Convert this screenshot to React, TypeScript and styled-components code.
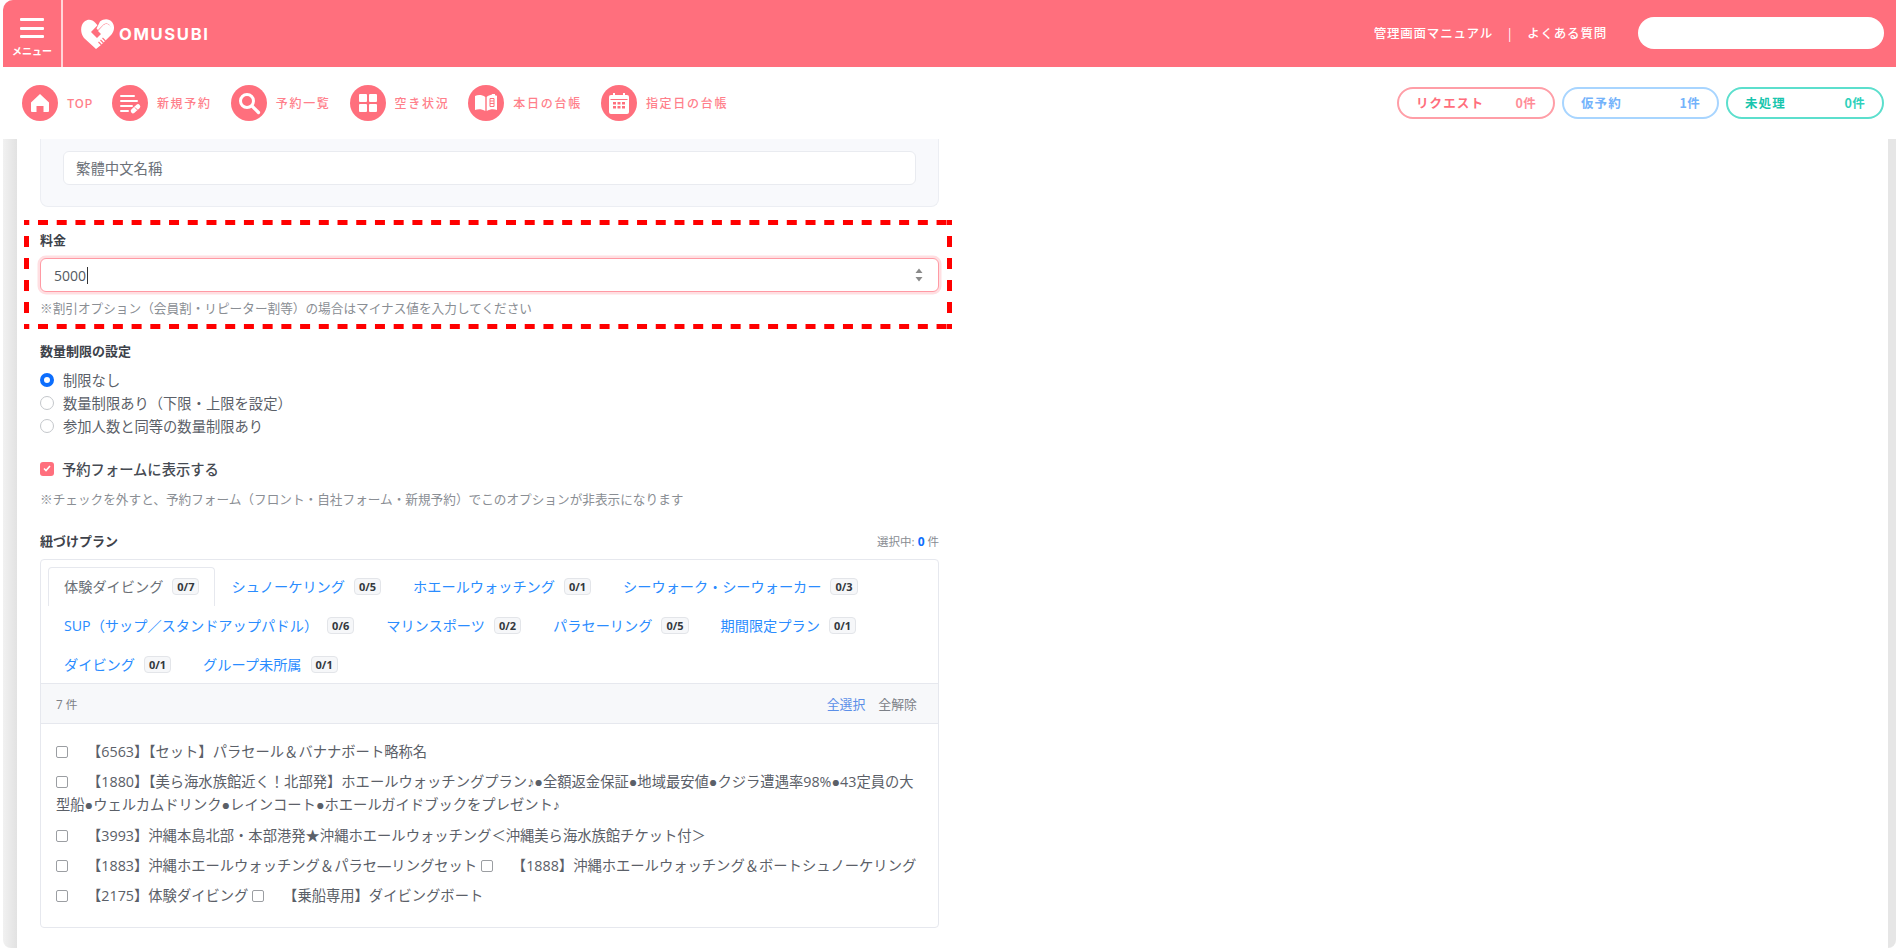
import React from "react";
import styled, { createGlobalStyle } from "styled-components";

const FONT = `"Open Sans", "Liberation Sans", "Noto Sans CJK JP", sans-serif`;
const ROUND = `"Noto Sans CJK JP", sans-serif`;
const PINK = "#ff6f7d";

const Global = createGlobalStyle`
  html, body { margin: 0; padding: 0; background: #fff; }
  body { font-family: ${FONT}; overflow: hidden; }
  * { box-sizing: border-box; }
`;

const Screen = styled.div`
  width: 1896px; height: 952px; padding: 0 0 4px 3px; background: #fff;
`;
const Frame = styled.div`
  height: 100%; display: flex; flex-direction: column;
  border-radius: 10px 0 8px 8px; overflow: hidden; background: linear-gradient(90deg, #f1f1f1 0, #e2e2e2 14px, #e6e6e6 15px);
`;
const TopBar = styled.header`
  height: 67px; flex: none; background: ${PINK}; display: flex; align-items: stretch; color: #fff;
`;
const MenuButton = styled.div`
  width: 60px; border-right: 2px solid #ffd4d8; display: flex; flex-direction: column; align-items: center;
  padding-top: 18px; font: 700 10px/1 ${ROUND};
`;
const Burger = styled.div`
  width: 24px; height: 20px; margin: 0 0 8px; display: flex; flex-direction: column; justify-content: space-between;
  span { display: block; height: 3px; background: #fff; border-radius: 1px; }
`;
const Logo = styled.div`
  display: flex; align-items: center; margin-left: 18px; gap: 5px; flex: 1;
`;
const LogoWord = styled.span`
  font: 700 16.6px/1 "Inter", sans-serif; letter-spacing: 1.65px; margin-top: 1px;
`;
const TopLinks = styled.div`
  display: flex; align-items: center; font: 500 12.5px/1 ${ROUND}; letter-spacing: 0.8px; margin-right: 31px; color: #fff;
  i { font-style: normal; margin: 0 15px; font-weight: 400; }
`;
const SearchPill = styled.div`
  width: 246px; height: 32px; margin: 17px 12px 0 0; background: #fff; border-radius: 16px;
`;

const NavBar = styled.nav`
  height: 72px; flex: none; background: #fff; display: flex; align-items: center; padding: 0 12px 0 19px;
`;
const NavList = styled.div`
  flex: 1; display: flex; gap: 19px; align-items: center;
`;
const NavItem = styled.div<{ $tight?: boolean }>`
  display: flex; align-items: center; gap: 9px; color: #ff7f8b; font: 500 12px/1 ${ROUND};
  letter-spacing: ${(p) => (p.$tight ? 0.7 : 1.7)}px;
`;
const NavCircle = styled.span`
  width: 36px; height: 36px; border-radius: 50%; background: ${PINK}; display: flex; align-items: center; justify-content: center;
`;
const Counters = styled.div`
  display: flex; gap: 7px;
`;
const tones = {
  pink: { b: "#ff9ea7", t: "#ff6e7c", n: "#ff8d98" },
  blue: { b: "#a8d5ff", t: "#74b3fb", n: "#74b3fb" },
  teal: { b: "#5cdfcd", t: "#17c5ad", n: "#2fd1bb" },
};
const Counter = styled.div<{ $tone: keyof typeof tones; $w: number }>`
  width: ${(p) => p.$w}px; height: 32px; border: 2px solid ${(p) => tones[p.$tone].b}; border-radius: 16px; display: flex;
  align-items: center; justify-content: space-between; padding: 0 17px;
  font: 700 12.5px/1 ${ROUND}; letter-spacing: 1.1px; color: ${(p) => tones[p.$tone].t};
  b { font-weight: 700; color: ${(p) => tones[p.$tone].n}; letter-spacing: 0.3px; }
`;

const Body = styled.div`
  flex: 1; min-height: 0; display: flex; padding: 0 8px 0 14px;
`;
const Main = styled.main`
  flex: 1; background: #fff; padding-left: 23px; color: #5b6068;
`;
const Column = styled.div`
  width: 899px;
`;
const LocaleCard = styled.div`
  height: 68px; background: #f8f9fc; border: 1px solid #eceef3; border-top: 0; border-radius: 0 0 8px 8px; padding: 12px 22px 0;
`;
const LocaleInput = styled.div`
  height: 34px; background: #fff; border: 1px solid #e9ebf0; border-radius: 6px; padding: 0 12px 1px;
  display: flex; align-items: center; font-size: 14.4px; color: #6c7178;
`;
const FeeField = styled.section`
  position: relative; height: 109px; margin-top: 13px; padding-top: 12px;
`;
const Outline = styled.svg`
  position: absolute; left: -16px; top: 0; pointer-events: none;
`;
const FieldLabel = styled.div`
  font-size: 13px; line-height: 16px; font-weight: 700; color: #3d424a;
`;
const FeeInput = styled.div`
  height: 34px; margin-top: 10px; border: 1px solid #ff9aa4; border-radius: 6px; background: #fff;
  box-shadow: 0 0 0 2.5px #ffdfe2; display: flex; align-items: center; padding: 0 14px 0 13px; font-size: 14px; color: #555a62;
`;
const Caret = styled.span`
  width: 1px; height: 17px; background: #333; margin-left: 1px; flex: none;
`;
const Spinner = styled.svg`
  margin-left: auto; flex: none;
`;
const Help = styled.div`
  font-size: 12.65px; line-height: 16px; color: #8a8e94;
`;
const FeeHelp = styled(Help)`
  margin-top: 8px;
`;
const QuantityLabel = styled(FieldLabel)`
  margin-top: 14px;
`;
const RadioList = styled.div`
  margin-top: 9px; display: flex; flex-direction: column;
`;
const Choice = styled.label`
  display: flex; align-items: center; gap: 9px; height: 23px; font-size: 14.3px; color: #5b6068;
`;
const Radio = styled.span<{ $on?: boolean }>`
  width: 14px; height: 14px; border-radius: 50%; flex: none; background: #fff;
  border: ${(p) => (p.$on ? "4px solid #0d6efd" : "1px solid #c4c7cb")};
`;
const ShowRow = styled(Choice)`
  margin-top: 20px; font-weight: 500; color: #454a52; gap: 8px;
`;
const PinkCheck = styled.span`
  width: 14px; height: 14px; border-radius: 3px; background: ${PINK}; flex: none; display: flex; align-items: center; justify-content: center;
`;
const ShowHelp = styled(Help)`
  margin-top: 11px;
`;
const PlanHead = styled.div`
  display: flex; justify-content: space-between; align-items: center; margin-top: 26px; height: 16px;
`;
const Selected = styled.span`
  font-size: 11.5px; color: #888c92;
  b { color: #0d6efd; font-size: 12px; font-weight: 700; }
`;
const PlanCard = styled.div`
  margin-top: 10px; height: 369px; border: 1px solid #e6e8ee; border-radius: 4px; display: flex; flex-direction: column; overflow: hidden;
`;
const Tabs = styled.div`
  height: 124px; padding: 7px 0 0 7px; display: flex; flex-wrap: wrap; align-content: flex-start;
`;
const Tab = styled.div<{ $active?: boolean }>`
  height: 39px; padding: 0 15px 2px; display: flex; align-items: center; font-size: 14.2px; white-space: nowrap;
  color: ${(p) => (p.$active ? "#6a6f76" : "#2a8cff")};
  border: 1px solid ${(p) => (p.$active ? "#e6e8ee" : "transparent")};
  border-bottom: 0; border-radius: 4px 4px 0 0;
`;
const TabCount = styled.span`
  margin-left: 9px; height: 17px; padding: 0 4px; display: flex; align-items: center; font-size: 11px; font-weight: 700; color: #33373d;
  background: #f6f7f9; border: 1px solid #e3e5e9; border-radius: 4px;
`;
const ListBar = styled.div`
  height: 41px; flex: none; background: #f7f8fa; border-top: 1px solid #e6e8ee; border-bottom: 1px solid #e6e8ee; margin-top: -1px;
  display: flex; align-items: center; justify-content: space-between; padding: 0 21px 0 15px; font-size: 12.9px; color: #7c8087;
  a { color: #5b8fe8; margin-right: 13px; }
`;
const Count = styled.span`
  font-size: 11.7px;
`;
const Items = styled.div`
  padding: 16px 15px 0 15px;
`;
const Item = styled.div`
  font-size: 14.3px; line-height: 23px; margin-bottom: 7.300px; color: #5b6068;
`;
const Box = styled.span<{ $after?: number }>`
  display: inline-block; vertical-align: -1px; width: 12px; height: 12px; border: 1px solid #9b9ea2; border-radius: 2px; background: #fff;
  margin-right: ${(p) => p.$after ?? 19}px;
`;

const Home = () => (
  <svg width="20" height="20" viewBox="0 0 20 20"><path fill="#fff" d="M10 1 19 9.500V18a1 1 0 0 1-1 1h-4.500v-6h-7v6H2a1 1 0 0 1-1-1V9.500z" /></svg>
);
const NewBooking = () => (
  <svg width="24" height="24" viewBox="0 0 24 24" fill="none">
    <path stroke="#fff" strokeWidth="2" strokeLinecap="round" d="M3 5h13M3 10h16M3 15h11M3 20h7" />
    <path stroke="#fff" strokeWidth="4.500" strokeLinecap="round" d="M15 20l5-4.500" />
    <path stroke={PINK} strokeWidth="1" d="M17 16.500l2.500 2.500" />
  </svg>
);
const Search = () => (
  <svg width="24" height="24" viewBox="0 0 24 24" fill="none">
    <circle cx="10" cy="10" r="6.500" stroke="#fff" strokeWidth="3" />
    <path stroke="#fff" strokeWidth="3.200" strokeLinecap="round" d="M15 15l6.500 6.500" />
  </svg>
);
const Grid = () => (
  <svg width="18" height="18" viewBox="0 0 18 18" fill="#fff">
    <rect width="8" height="8" rx="1" /><rect x="10" width="8" height="8" rx="1" />
    <rect y="10" width="8" height="8" rx="1" /><rect x="10" y="10" width="8" height="8" rx="1" />
  </svg>
);
const Book = () => (
  <svg width="22" height="18" viewBox="0 0 22 18">
    <path fill="#fff" d="M0 2c3-1.500 7-1.500 10.300 1v14C7 15 3 15 0 16z" />
    <path fill="#fff" d="M11.700 3C13 1.800 15 1 17 .6V0h3v1.200l2 .6V16c-3-1-7-1-10.300 1z" />
    <path stroke={PINK} strokeWidth="1" fill="none" d="M15 4.500h4v8h-4zM15 7h4M15 9.500h4" />
  </svg>
);
const Calendar = () => (
  <svg width="20" height="21" viewBox="0 0 20 21">
    <path fill="#fff" d="M2 2h2V0h2v2h8V0h2v2h2a2 2 0 0 1 2 2v15a2 2 0 0 1-2 2H2a2 2 0 0 1-2-2V4a2 2 0 0 1 2-2z" />
    <path fill={PINK} d="M1.500 6h17v1h-17zM4 9h3v2.500H4zM8.500 9h3v2.500h-3zM13 9h3v2.500h-3zM4 13h3v2.500H4zM8.500 13h3v2.500h-3zM13 13h3v2.500h-3z" />
  </svg>
);
const Heart = () => (
  <svg width="33" height="32" viewBox="0 0 33 32">
    <path fill="#fff" d="M15 31 3 20C-1 15-.8 7 3.500 3.500 7 .7 11 1 14.500 5l2 2.300L10 14l6 6 4-4-3-3 5-5.500c2-2 5-2 6.800 0s2 4.500.200 7z" />
    <path fill="#fff" d="M19 3.500c4-3 9-3 12 .5 3 3.500 2.500 9-.5 12.500L20 27l-5 4 2-5 11-12c1.500-2 2-5 .5-7-1.500-1.500-4-2-6-.5L17 12l-1.500-1.500z" />
    <path stroke={PINK} strokeWidth="1.100" fill="none" d="M17.500 24l3 3M19.500 22l3 3M21.500 20l3 3" />
  </svg>
);

const navItems = [
  { icon: <Home />, label: "TOP" },
  { icon: <NewBooking />, label: "新規予約" },
  { icon: <Search />, label: "予約一覧" },
  { icon: <Grid />, label: "空き状況" },
  { icon: <Book />, label: "本日の台帳" },
  { icon: <Calendar />, label: "指定日の台帳" },
];
const tabs = [
  ["体験ダイビング", "0/7"], ["シュノーケリング", "0/5"], ["ホエールウォッチング", "0/1"], ["シーウォーク・シーウォーカー", "0/3"],
  ["SUP（サップ／スタンドアップパドル）", "0/6"], ["マリンスポーツ", "0/2"], ["パラセーリング", "0/5"], ["期間限定プラン", "0/1"],
  ["ダイビング", "0/1"], ["グループ未所属", "0/1"],
];

export default function App() {
  return (
    <Screen>
      <Global />
      <Frame>
        <TopBar>
          <MenuButton>
            <Burger><span /><span /><span /></Burger>
            メニュー
          </MenuButton>
          <Logo>
            <Heart />
            <LogoWord>OMUSUBI</LogoWord>
          </Logo>
          <TopLinks>管理画面マニュアル<i>|</i>よくある質問</TopLinks>
          <SearchPill />
        </TopBar>
        <NavBar>
          <NavList>
            {navItems.map((n) => (
              <NavItem key={n.label} $tight={n.label === "TOP"}><NavCircle>{n.icon}</NavCircle>{n.label}</NavItem>
            ))}
          </NavList>
          <Counters>
            <Counter $tone="pink" $w={158}>リクエスト<b>0件</b></Counter>
            <Counter $tone="blue" $w={157}>仮予約<b>1件</b></Counter>
            <Counter $tone="teal" $w={158}>未処理<b>0件</b></Counter>
          </Counters>
        </NavBar>
        <Body>
          <Main>
            <Column>
              <LocaleCard><LocaleInput>繁體中文名稱</LocaleInput></LocaleCard>
              <FeeField>
                <Outline width="928" height="109" fill="none" stroke="#ff0000" strokeWidth="5">
                  <line x1="0" y1="2.500" x2="928" y2="2.500" strokeDasharray="10 8.720" strokeDashoffset="4.720" />
                  <line x1="0" y1="106.500" x2="928" y2="106.500" strokeDasharray="10 8.720" strokeDashoffset="4.720" />
                  <line x1="2.500" y1="0" x2="2.500" y2="109" strokeDasharray="11 11" strokeDashoffset="6" />
                  <line x1="925.500" y1="0" x2="925.500" y2="109" strokeDasharray="11 11" strokeDashoffset="6" />
                </Outline>
                <FieldLabel>料金</FieldLabel>
                <FeeInput>
                  5000<Caret />
                  <Spinner width="10" height="18" viewBox="0 0 10 18" fill="#8a8a8a">
                    <path d="M5 2.500 8.500 7h-7zM5 15.500 1.500 11h7z" />
                  </Spinner>
                </FeeInput>
                <FeeHelp>※割引オプション（会員割・リピーター割等）の場合はマイナス値を入力してください</FeeHelp>
              </FeeField>
              <QuantityLabel>数量制限の設定</QuantityLabel>
              <RadioList>
                <Choice><Radio $on />制限なし</Choice>
                <Choice><Radio />数量制限あり（下限・上限を設定）</Choice>
                <Choice><Radio />参加人数と同等の数量制限あり</Choice>
              </RadioList>
              <ShowRow>
                <PinkCheck>
                  <svg width="8" height="7" viewBox="0 0 8 7" fill="none"><path d="M1 3.500 3 5.500 7 1" stroke="#fff" strokeWidth="1.600" /></svg>
                </PinkCheck>
                予約フォームに表示する
              </ShowRow>
              <ShowHelp>※チェックを外すと、予約フォーム（フロント・自社フォーム・新規予約）でこのオプションが非表示になります</ShowHelp>
              <PlanHead>
                <FieldLabel>紐づけプラン</FieldLabel>
                <Selected>選択中: <b>0</b> 件</Selected>
              </PlanHead>
              <PlanCard>
                <Tabs>
                  {tabs.map(([name, count], i) => (
                    <Tab key={name} $active={i === 0}>{name}<TabCount>{count}</TabCount></Tab>
                  ))}
                </Tabs>
                <ListBar>
                  <Count>7 件</Count>
                  <span><a>全選択</a>全解除</span>
                </ListBar>
                <Items>
                  <Item><Box />【6563】【セット】パラセール＆バナナボート略称名</Item>
                  <Item><Box />【1880】【美ら海水族館近く！北部発】ホエールウォッチングプラン♪●全額返金保証●地域最安値●クジラ遭遇率98%●43定員の大型船●ウェルカムドリンク●レインコート●ホエールガイドブックをプレゼント♪</Item>
                  <Item><Box />【3993】沖縄本島北部・本部港発★沖縄ホエールウォッチング＜沖縄美ら海水族館チケット付＞</Item>
                  <Item><Box />【1883】沖縄ホエールウォッチング＆パラセ―リングセット <Box />【1888】沖縄ホエールウォッチング＆ボートシュノーケリング</Item>
                  <Item><Box />【2175】体験ダイビング <Box />【乗船専用】ダイビングボート</Item>
                </Items>
              </PlanCard>
            </Column>
          </Main>
        </Body>
      </Frame>
    </Screen>
  );
}
